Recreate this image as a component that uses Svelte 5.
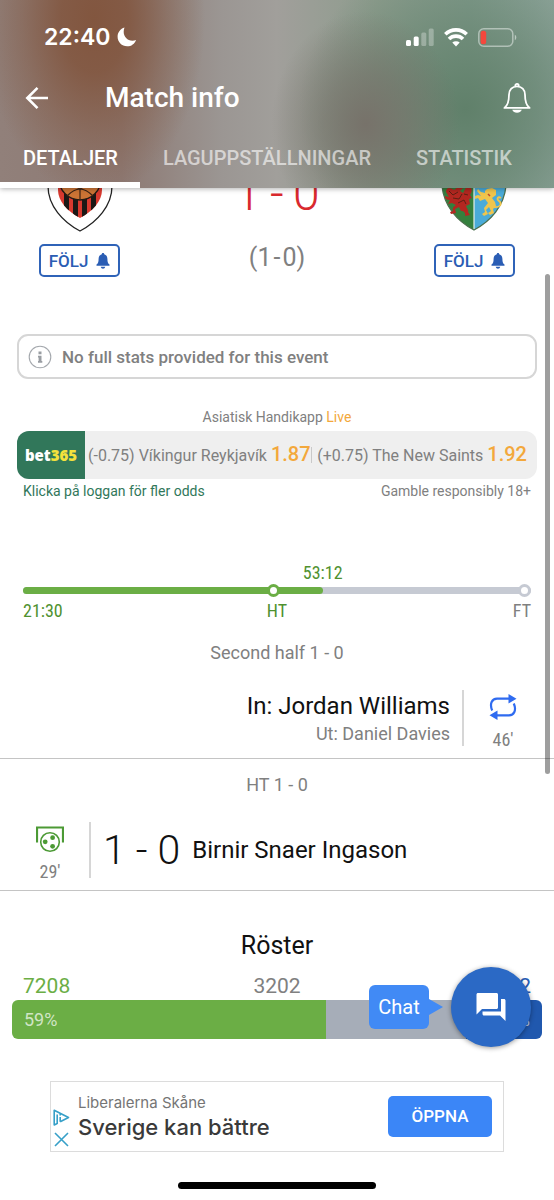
<script lang="ts">
  const tabs = ["DETALJER", "LAGUPPSTÄLLNINGAR", "STATISTIK"];
  let active = $state(0);

  const elapsed = 59;
  const votes = [
    { side: "home", count: 7208, percent: 59 },
    { side: "draw", count: 3202, percent: 26 },
    { side: "away", count: 1752, percent: 14 },
  ];
  const total = votes.reduce((sum, v) => sum + v.count, 0);
</script>

{#snippet followButton()}
  <button class="follow" type="button">
    FÖLJ
    <svg width="14" height="16" viewBox="0 0 13 16" fill="currentColor" aria-hidden="true">
      <path d="M6.500 0c.8 0 1.200.5 1.200 1.200 2 .6 3.200 2.200 3.200 4.500 0 3.300.6 4.800 2.100 5.800v1.300H0v-1.300c1.500-1 2.100-2.500 2.100-5.800 0-2.300 1.200-3.900 3.200-4.500C5.300.5 5.700 0 6.500 0zM4.200 13.800h4.600c-.3 1.200-1.200 1.900-2.300 1.900s-2-.7-2.300-1.900z" />
    </svg>
  </button>
{/snippet}

<div class="screen">
  <header class="top">
    <div class="status-bar">
      <span class="clock">22:40</span>
      <svg class="moon" width="20" height="20" viewBox="0 0 20 20" fill="#fff" aria-hidden="true">
        <path d="M7.500.6C3.500 1.800.6 5.400.6 9.800c0 5.300 4.200 9.500 9.500 9.500 4.200 0 7.700-2.600 9-6.400-1.200.5-2.400.8-3.700.8-5 0-8.700-3.800-8.700-8.600 0-1.600.2-3.200.8-4.500z" />
      </svg>
      <span class="indicators">
        <svg width="28" height="19" viewBox="0 0 28 19" fill="#fff" aria-hidden="true">
          <rect x="0" y="12" width="5" height="6" rx="1.500" />
          <rect x="7.700" y="8.500" width="5" height="9.500" rx="1.500" />
          <rect x="15.300" y="4.500" width="5" height="13.500" rx="1.500" opacity=".3" />
          <rect x="22.700" y="0.500" width="5" height="17.500" rx="1.500" opacity=".3" />
        </svg>
        <svg width="24" height="19" viewBox="0 0 24 19" aria-hidden="true">
          <g fill="none" stroke="#fff" stroke-width="3.600">
            <path d="M1.300 6.200a15.300 15.300 0 0 1 21.400 0" />
            <path d="M5 11a9.900 9.900 0 0 1 14 0" />
          </g>
          <path fill="#fff" d="M8.300 14.600a5.400 5.400 0 0 1 7.400 0L12 18.400z" />
        </svg>
        <svg width="39" height="19" viewBox="0 0 39 19" aria-hidden="true">
          <rect x=".8" y=".8" width="34" height="17.400" rx="5" fill="none" stroke="#fff" stroke-opacity=".45" stroke-width="1.500" />
          <rect x="2.600" y="2.800" width="5.600" height="13.400" rx="2.500" fill="#f4483d" />
          <path d="M36.800 6.800c2 .8 2 4.600 0 5.400z" fill="#fff" opacity=".5" />
        </svg>
      </span>
    </div>

    <div class="toolbar">
      <button class="icon-button" type="button" aria-label="Back">
        <svg width="24" height="24" viewBox="0 0 24 24" fill="none" stroke="#fff" stroke-width="2.600" aria-hidden="true">
          <path d="M23 12H2.500M12.500 1.800 2.300 12l10.200 10.200" />
        </svg>
      </button>
      <h1>Match info</h1>
      <button class="icon-button" type="button" aria-label="Notifications">
        <svg width="28" height="30" viewBox="0 0 28 30" aria-hidden="true">
          <path d="M14 3.300c4.700 0 8 3.400 8 8.400 0 7.300 1 10.600 4.600 13.200H1.400C5 22.300 6 19 6 11.700c0-5 3.300-8.400 8-8.400zM12.300 3.400V2.600c0-2.200 3.400-2.200 3.400 0v.8" fill="none" stroke="#fff" stroke-width="1.800" stroke-linejoin="round" />
          <path d="M9.200 26.800h9.600c-.8 1.900-2.500 3-4.800 3s-4-1.100-4.800-3z" fill="#fff" />
        </svg>
      </button>
    </div>

    <nav class="tabs">
      {#each tabs as tab, i (tab)}
        <button type="button" class:active={active === i} onclick={() => (active = i)}>{tab}</button>
      {/each}
    </nav>
  </header>

  <main>
    <section class="teams">
      <div class="team">
        <svg width="66" height="92" viewBox="0 0 66 92" aria-hidden="true">
          <path d="M1 14h64v32c0 20-15 36-32 45C16 82 1 66 1 46z" fill="#fff" stroke="#222" stroke-width="1.300" />
          <clipPath id="inner"><path d="M11 20h44v30c0 11-9 21-22 28C20 71 11 61 11 50z" /></clipPath>
          <g clip-path="url(#inner)">
            <path d="M11 20h44v60H11z" fill="#d8392f" />
            <path d="M17 20h5v60h-5zM26 20h5v60h-5zM35 20h5v60h-5zM44 20h5v60h-5z" fill="#1b1816" />
            <circle cx="33" cy="39" r="21" fill="#cc7435" stroke="#251a14" stroke-width="1.400" />
            <path d="M33 49v11M33 49c-5 0-9 3-13 7M33 49c5 0 9 3 13 7M33 49l-8-4M33 49l8-4" fill="none" stroke="#3b2315" stroke-width="1.200" />
          </g>
        </svg>
        {@render followButton()}
      </div>

      <div class="score">
        <div class="full-score"><span>1</span><span>-</span><span>0</span></div>
        <div class="half-score"><span>(1</span><span>-</span><span>0)</span></div>
      </div>

      <div class="team">
        <svg width="66" height="92" viewBox="0 0 66 92" aria-hidden="true">
          <path d="M1 14h32v76C16 81 3 66 1 46z" fill="#34803d" />
          <path d="M65 14H33v76c17-9 30-24 32-44z" fill="#4aabd9" />
          <path d="M33 14v76" stroke="#e8f1e7" stroke-width="1.200" />
          <path d="M1 14v32c2 20 15 35 32 44 17-9 30-24 32-44V14" fill="none" stroke="#4c6f4d" stroke-width="1.300" />
          <path d="M5 52c0-5 4-5 8-2l4-3 5 1-3 3 3 2c2-3 2-6 6-6 4 1 3 5 1 8l2 3-3 1 1 5-4 2c1 3 3 4 2 6l2 3-5 1c1-3-1-5-4-5l-2-4-4 2 1 4-5 1-1-2 3-1c-1-3 1-5 3-6l-4-2-4 1 2-4c-3 0-5-1-5-4l4 1z" fill="#b32720" />
          <path d="m8 51 4 4 5-3M12 58l6 1 3-5M17 63l6-3 2 4M23 54l4 1" fill="none" stroke="#5b2114" />
          <path d="m44 51 2-2 5-1 4 2v5l-4 3 3 4 1 4-3 3 1 4-4 2-2-2 3-2-2-4-3 3 2 4-4 2-2-2 3-2-1-4 4-5-3-4-5 2-2-3-3 1v-3l3-1 3 1-4-5 1-2 3 3 4 1z" fill="#efc54c" />
          <path d="M53 67c7 1 8-4 5-6s-1-5 2-3" fill="none" stroke="#efc54c" stroke-width="1.800" />
          <path d="m47 54 2 2" stroke="#c04a2b" stroke-width="1.500" />
        </svg>
        {@render followButton()}
      </div>
    </section>

    <p class="notice">
      <svg width="24" height="24" viewBox="0 0 24 24" aria-hidden="true">
        <circle cx="12" cy="12" r="10.800" fill="none" stroke="#a4a8ad" stroke-width="1.100" />
        <path d="M10.500 6.500h3v2.800h-3zM10 10.800h3.500v5.300h.8v1.600H10v-1.600h.6v-3.700H10z" fill="#999da2" />
      </svg>
      No full stats provided for this event
    </p>

    <section class="betting">
      <p class="market">Asiatisk Handikapp <span>Live</span></p>
      <div class="odds">
        <a class="bookmaker" href="#odds">bet<span>365</span></a>
        <div class="odd">(-0.75) Víkingur Reykjavík <strong>1.87</strong></div>
        <div class="odd away">(+0.75) The New Saints <strong>1.92</strong></div>
      </div>
      <div class="betting-foot">
        <a href="#odds">Klicka på loggan för fler odds</a>
        <span>Gamble responsibly 18+</span>
      </div>
    </section>

    <section class="timeline">
      <div class="now"><span style:margin-left="{elapsed}%">53:12</span></div>
      <div class="track">
        <div class="progress" style:width="{elapsed}%"></div>
        <i class="dot half"></i>
        <i class="dot full"></i>
      </div>
      <div class="marks">
        <span>21:30</span>
        <span>HT</span>
        <span class="pending">FT</span>
      </div>
    </section>

    <section class="events">
      <h2>Second half 1 - 0</h2>
      <div class="event away">
        <div class="players">
          <span class="player">In: Jordan Williams</span>
          <span class="player-out">Ut: Daniel Davies</span>
        </div>
        <div class="minute">
          <svg width="28" height="28" viewBox="0 0 28 28" aria-hidden="true">
            <g fill="none" stroke="#2f6bf0" stroke-width="2.200">
              <path d="M3.200 17.500C.3 10.500 3 5.700 8 5.700h12" />
              <path d="M24.800 10.500c2.900 7 .2 11.800-4.800 11.800H8" />
            </g>
            <path d="M19.500 1v9.400l8-4.700zM8.500 17.600V27l-8-4.700z" fill="#2f6bf0" />
          </svg>
          <span>46'</span>
        </div>
      </div>

      <h2>HT 1 - 0</h2>
      <div class="event home">
        <div class="minute">
          <svg width="28" height="28" viewBox="0 0 28 28" fill="none" stroke="#4c9a35" aria-hidden="true">
            <path d="M1 17.500V2.500h26v15" stroke-width="2.200" />
            <circle cx="14" cy="17" r="9.300" stroke-width="1.600" />
            <g fill="#4c9a35" stroke="none">
              <circle cx="9.200" cy="16.800" r="2.400" />
              <circle cx="16.600" cy="12.700" r="2.400" />
              <circle cx="16.600" cy="21.300" r="2.400" />
            </g>
          </svg>
          <span>29'</span>
        </div>
        <div class="goal">
          <span class="goal-score">1 - 0</span>
          <span class="player">Birnir Snaer Ingason</span>
        </div>
      </div>
    </section>

    <section class="votes">
      <h2>Röster</h2>
      <div class="counts">
        {#each votes as vote (vote.side)}
          <span class={vote.side}>{vote.count}</span>
        {/each}
      </div>
      <div class="vote-bar">
        {#each votes as vote (vote.side)}
          <div class={vote.side} style:width="{(vote.count / total) * 100}%">
            {#if vote.side !== "draw"}{vote.percent}%{/if}
          </div>
        {/each}
      </div>
      <div class="chat">
        <span class="chat-label">Chat</span>
        <button type="button" aria-label="Chat">
          <svg width="30" height="30" viewBox="0 0 30 30" fill="#fff" aria-hidden="true">
            <path d="M2 1h18.500c.8 0 1.500.7 1.500 1.500v13c0 .8-.7 1.500-1.500 1.500H6l-5.500 5.500v-20C.5 1.700 1.200 1 2 1z" />
            <path d="M25 7h3c.8 0 1.500.7 1.500 1.500V29L24 23.500H8c-.8 0-1.500-.7-1.500-1.500v-2.500H25z" />
          </svg>
        </button>
      </div>
    </section>

    <aside class="ad">
      <div class="ad-marks">
        <svg width="17" height="17" viewBox="0 0 17 17" fill="none" stroke="#37a0c8" stroke-width="1.600" aria-hidden="true">
          <path d="M4.200 14.500 1.200 16V1.200l14.300 7.300-8.300 4.300M4.200 15V5.500" stroke-linejoin="round" />
          <path d="M7.200 8v4.800M7.200 5v1.600" />
        </svg>
        <button type="button" aria-label="Close">
          <svg width="15" height="15" viewBox="0 0 15 15" stroke="#37a0c8" stroke-width="1.600" aria-hidden="true">
            <path d="m1 1 13 13M14 1 1 14" />
          </svg>
        </button>
      </div>
      <div class="ad-text">
        <span>Liberalerna Skåne</span>
        <strong>Sverige kan bättre</strong>
      </div>
      <a class="ad-open" href="#ad">ÖPPNA</a>
    </aside>
  </main>

  <div class="home-indicator"></div>
  <div class="scrollbar"></div>
</div>

<style>
  :global(body) {
    background: #fff;
  }

  .screen {
    position: relative;
    overflow: hidden;
    font-family: Roboto, "Liberation Sans", sans-serif;
    color: #111;
  }

  h1,
  h2,
  p {
    margin: 0;
    font-weight: 400;
  }

  button {
    padding: 0;
    border: 0;
    background: none;
    font: inherit;
    color: inherit;
  }

  a {
    color: inherit;
    text-decoration: none;
  }

  svg {
    display: block;
    flex: none;
  }

  .top {
    position: relative;
    z-index: 1;
    color: #fff;
    background:
      radial-gradient(ellipse 20% 95% at 17% 10%, #82563f 0%, #82563fe0 30%, #82563f66 65%, #82563f00 100%),
      radial-gradient(ellipse 17% 60% at 66% 66%, #77726a 0%, #77726a99 45%, #77726a00 100%),
      radial-gradient(ellipse 30% 85% at 84% 58%, #60806a 0%, #60806a99 45%, #60806a00 100%),
      linear-gradient(90deg, #91807a 0%, #8d7973 22%, #9b9693 40%, #a19f9b 50%, #8d9c8d 68%, #839c8e 85%, #8fa59c 100%);
    box-shadow: 0 1px 5px rgb(0 0 0 / 30%);
  }

  .status-bar {
    display: flex;
    align-items: center;
    height: 74px;
    padding: 0 37px 0 44px;
  }

  .clock {
    font: 600 23px/30px Inter, sans-serif;
  }

  .moon {
    margin-left: 7px;
  }

  .indicators {
    display: flex;
    gap: 10px;
    margin-left: auto;
  }

  .toolbar {
    display: flex;
    align-items: center;
    height: 48px;
    padding: 0 23px 0 25px;
  }

  .toolbar h1 {
    flex: 1;
    margin-left: 56px;
    font-size: 28px;
    font-weight: 500;
    line-height: 32px;
  }

  .tabs {
    display: flex;
  }

  .tabs button {
    padding: 24px 22px 12px 23px;
    border-bottom: 6px solid transparent;
    font-size: 20px;
    font-weight: 500;
    line-height: 24px;
    color: rgb(255 255 255 / 60%);
  }

  .tabs button.active {
    border-color: #fff;
    color: #fff;
  }

  main {
    margin-top: -48px;
  }

  .teams {
    display: flex;
    justify-content: space-between;
    padding: 0 39px;
  }

  .team {
    display: flex;
    flex-direction: column;
    align-items: center;
    gap: 12px;
  }

  .follow {
    display: flex;
    align-items: center;
    justify-content: center;
    gap: 8px;
    box-sizing: border-box;
    width: 81px;
    height: 33px;
    border: 2px solid #2f63b8;
    border-radius: 5px;
    font-size: 17px;
    font-weight: 500;
    color: #2a5db4;
  }

  .score {
    display: flex;
    flex-direction: column;
    align-items: center;
    padding-top: 22px;
  }

  .full-score,
  .half-score {
    display: flex;
  }

  .full-score {
    gap: 9px;
    font-size: 48px;
    font-weight: 300;
    line-height: 64px;
    color: #d9292e;
  }

  .half-score {
    gap: 2px;
    padding-top: 16px;
    font-size: 25px;
    line-height: 32px;
    color: #808080;
  }

  .notice {
    display: flex;
    align-items: center;
    gap: 10px;
    box-sizing: border-box;
    height: 45px;
    margin: 57px 17px 0;
    padding: 0 9px;
    border: 2px solid #d6d6d6;
    border-radius: 11px;
    font-size: 17px;
    font-weight: 500;
    color: #808080;
  }

  .betting {
    padding: 28px 17px 0;
    color: #808080;
  }

  .market {
    margin-bottom: 4px;
    font-size: 14px;
    line-height: 20px;
    text-align: center;
  }

  .market span,
  .odd strong {
    color: #f3a83b;
  }

  .odds {
    display: flex;
    align-items: center;
    overflow: hidden;
    height: 48px;
    border-radius: 12px;
    background: #efefef;
  }

  .bookmaker {
    display: flex;
    flex: none;
    align-items: center;
    justify-content: center;
    width: 68px;
    height: 100%;
    background: #31775a;
    font: 800 15px/20px "Open Sans", sans-serif;
    color: #fff;
  }

  .bookmaker span {
    color: #f5e23c;
  }

  .odd {
    padding-left: 3px;
    font-size: 16px;
    line-height: 24px;
    white-space: nowrap;
  }

  .odd strong {
    font-size: 20px;
    font-weight: 500;
  }

  .odd.away {
    flex: 1;
    padding-right: 10px;
    text-align: right;
    background: linear-gradient(#c9c9c9, #c9c9c9) left center / 1px 16px no-repeat;
  }

  .betting-foot {
    display: flex;
    justify-content: space-between;
    padding: 2px 6px 0;
    font-size: 14px;
    line-height: 20px;
  }

  .betting-foot a {
    color: #31775a;
  }

  .timeline {
    padding: 60px 23px 0;
    font-family: "Roboto Condensed", Roboto, sans-serif;
    font-size: 18px;
    line-height: 24px;
    color: #4f9130;
  }

  .now span {
    display: inline-block;
    translate: -50%;
  }

  .track {
    position: relative;
    height: 7px;
    margin: 2px 0 5px;
    border-radius: 4px;
    background: #c6cad3;
  }

  .progress {
    height: 100%;
    border-radius: 4px;
    background: #6bae45;
  }

  .dot {
    position: absolute;
    top: -3px;
    box-sizing: border-box;
    width: 13px;
    height: 13px;
    border: 3px solid #c6cad3;
    border-radius: 50%;
    background: #fff;
  }

  .dot.half {
    left: 48%;
    border-color: #6bae45;
  }

  .dot.full {
    right: 0;
  }

  .marks {
    display: grid;
    grid-template-columns: 1fr auto 1fr;
  }

  .pending {
    text-align: right;
    color: #808080;
  }

  .events h2 {
    padding: 14px 0 25px;
    font-size: 18px;
    line-height: 24px;
    text-align: center;
    color: #808080;
  }

  .events h2:first-child {
    padding-top: 18px;
  }

  .event {
    display: flex;
    padding-bottom: 12px;
    border-bottom: 1px solid #c4c4c4;
  }

  .event.away {
    justify-content: flex-end;
  }

  .minute {
    display: flex;
    flex-direction: column;
    align-items: center;
    gap: 7px;
    width: 78px;
    height: 53px;
    padding-top: 3px;
    font: 18px/24px "Roboto Condensed", Roboto, sans-serif;
    color: #808080;
  }

  .away .minute {
    padding-right: 12px;
    border-left: 2px solid #d6d6d6;
  }

  .home .minute {
    padding-left: 11px;
    border-right: 2px solid #d6d6d6;
  }

  .players {
    display: flex;
    flex-direction: column;
    align-items: flex-end;
    padding-right: 12px;
  }

  .player {
    font-size: 24px;
    line-height: 32px;
  }

  .player-out {
    font-size: 18px;
    line-height: 24px;
    color: #808080;
  }

  .goal {
    display: flex;
    align-items: center;
    gap: 12px;
    padding-left: 12px;
  }

  .goal-score {
    font-size: 41px;
    font-weight: 300;
    line-height: 56px;
  }

  .votes {
    position: relative;
    padding: 39px 12px 0;
  }

  .votes h2 {
    font-size: 25px;
    line-height: 32px;
    text-align: center;
  }

  .counts {
    display: grid;
    grid-template-columns: 1fr auto 1fr;
    padding: 12px 11px 2px;
    font-size: 21px;
    line-height: 24px;
  }

  .counts .home {
    color: #6bae45;
  }

  .counts .draw {
    color: #808080;
  }

  .counts .away {
    text-align: right;
    color: #2a5db4;
  }

  .vote-bar {
    display: flex;
    overflow: hidden;
    height: 39px;
    border-radius: 6px;
    font-size: 18px;
    line-height: 39px;
    color: rgb(255 255 255 / 70%);
  }

  .vote-bar div {
    box-sizing: border-box;
    padding: 0 12px;
  }

  .vote-bar .home {
    background: #6bae45;
  }

  .vote-bar .draw {
    background: #a6adb8;
  }

  .vote-bar .away {
    background: #2058ae;
    text-align: right;
  }

  .chat {
    position: absolute;
    right: 23px;
    bottom: -8px;
    display: flex;
    align-items: center;
    gap: 22px;
  }

  .chat button {
    display: grid;
    place-items: center;
    width: 80px;
    height: 80px;
    border-radius: 50%;
    background: #2b69c5;
    box-shadow: 0 1px 5px rgb(0 0 0 / 40%);
  }

  .chat-label {
    position: relative;
    width: 60px;
    border-radius: 6px;
    background: #418af5;
    font-size: 20px;
    line-height: 44px;
    text-align: center;
    color: #fff;
  }

  .chat-label::after {
    content: "";
    position: absolute;
    top: 14px;
    left: 100%;
    border: 8px solid transparent;
    border-left: 14px solid #418af5;
    border-right: 0;
  }

  .ad {
    display: flex;
    align-items: center;
    box-sizing: border-box;
    height: 71px;
    margin: 42px 50px 0;
    padding: 0 11px 0 2px;
    border: 1px solid #dcdcdc;
  }

  .ad-marks {
    display: flex;
    flex-direction: column;
    align-self: flex-end;
    align-items: center;
    gap: 6px;
    padding-bottom: 4px;
  }

  .ad-text {
    flex: 1;
    display: flex;
    flex-direction: column;
    margin-left: 8px;
    font-family: Inter, sans-serif;
    font-size: 15px;
    line-height: 20px;
    color: #757575;
  }

  .ad-text strong {
    font-size: 22px;
    font-weight: 500;
    line-height: 28px;
    color: #3a3a3a;
  }

  .ad-open {
    width: 104px;
    border-radius: 5px;
    background: #3b86f7;
    font-size: 17px;
    font-weight: 500;
    line-height: 41px;
    text-align: center;
    color: #fff;
  }

  .home-indicator {
    width: 198px;
    height: 7px;
    margin: 30px auto 12px;
    border-radius: 4px;
    background: #000;
  }

  .scrollbar {
    position: absolute;
    top: 274px;
    right: 4px;
    width: 5px;
    height: 500px;
    border-radius: 3px;
    background: rgb(0 0 0 / 38%);
  }
</style>
